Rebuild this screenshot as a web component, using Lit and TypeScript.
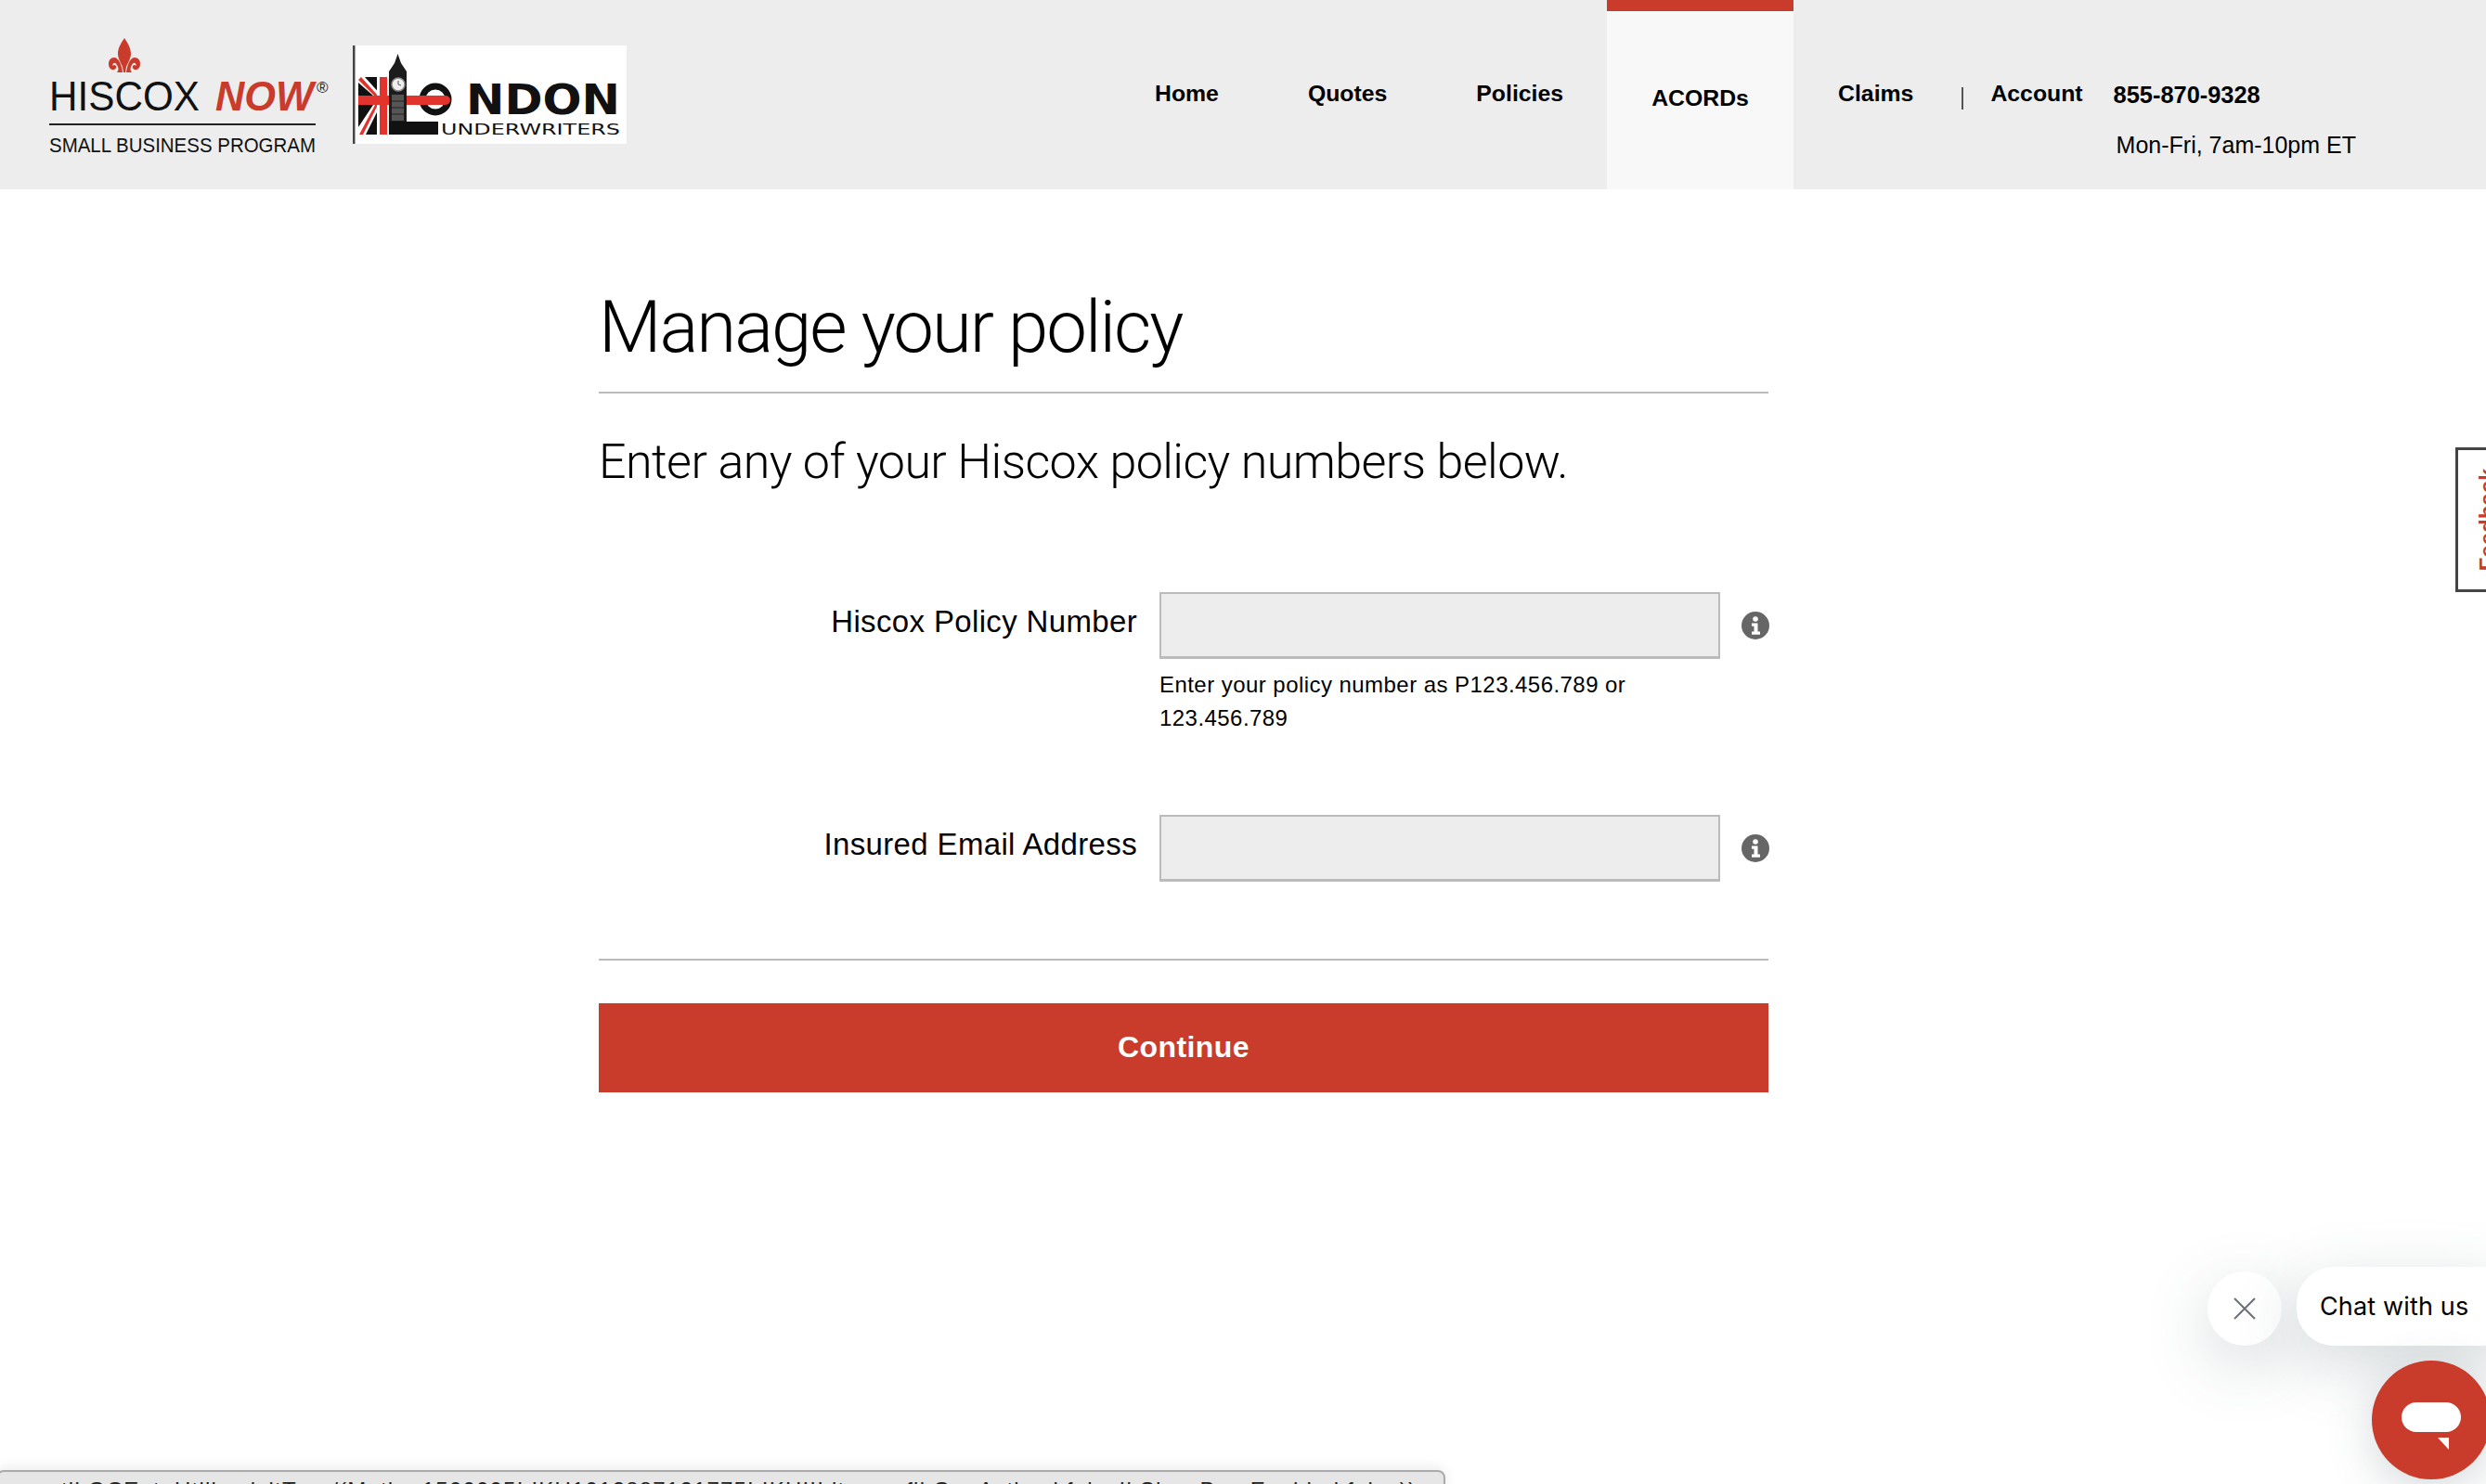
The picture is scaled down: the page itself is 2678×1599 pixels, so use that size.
import { LitElement, html, css } from "lit";
import { customElement } from "lit/decorators.js";

const RED = "#c93c2c";

@customElement("app-root")
export class AppRoot extends LitElement {
  static styles = css`
    :host { display: block; position: relative; width: 2678px; height: 1599px; overflow: hidden; background: #fff; font-family: "Liberation Sans", Arial, sans-serif; color: #000; }
    * { box-sizing: border-box; }
    header { height: 204px; background: #ededed; display: flex; align-items: stretch; }
    .logos { width: 1210px; display: flex; align-items: flex-start; padding: 40px 0 0 48px; flex: none; }
    .hiscox { width: 310px; height: 135px; display: block; flex: none; }
    .london { width: 295px; height: 106px; margin: 9px 0 0 22px; display: block; flex: none; }
    nav { display: flex; align-items: stretch; flex: none; }
    .item { font-size: 24.8px; font-weight: 700; line-height: 28px; padding-top: 87px; white-space: nowrap; }
    .home { margin-left: 34px; }
    .quotes { margin-left: 96px; }
    .policies { margin-left: 96px; }
    .active { width: 201px; margin-left: 47px; background: #f8f8f8; border-top: 12px solid #c93c2c; padding-top: 80px; text-align: center; }
    .claims { margin-left: 48px; }
    .sep { width: 2px; height: 24px; background: #555; margin: 94px 0 0 52px; }
    .account { margin-left: 29px; }
    .contact { margin-left: 33px; }
    .phone { font-size: 25.4px; font-weight: 700; line-height: 28px; margin-top: 88px; }
    .hours { font-size: 25px; line-height: 28px; margin: 26px 0 0 3px; white-space: nowrap; }
    main { width: 1260px; margin-left: 645px; }
    h1 { margin: 0; padding-top: 91px; height: 220px; font-family: Roboto, sans-serif; font-size: 78px; line-height: 116px; font-weight: 300; letter-spacing: -2px; border-bottom: 2px solid #bbb; white-space: nowrap; }
    .intro { margin: 0; padding-top: 45px; font-family: Roboto, sans-serif; font-size: 52px; line-height: 58px; font-weight: 300; letter-spacing: -0.6px; height: 100px; white-space: nowrap; }
    .row { display: flex; align-items: flex-start; }
    .first { margin-top: 114px; }
    .second { margin-top: 86px; }
    label { width: 580px; text-align: right; font-size: 33px; line-height: 38px; padding-top: 13px; flex: none; letter-spacing: 0.35px; }
    .control { width: 604px; margin-left: 24px; flex: none; }
    input { display: block; width: 100%; height: 72px; background: #ededed; border: 2px solid #bbb; border-bottom-width: 3px; border-radius: 0; padding: 0; outline: none; }
    .hint { font-size: 24px; line-height: 36px; margin-top: 10px; letter-spacing: 0.45px; }
    .info { width: 30px; height: 30px; margin: 21px 0 0 23px; display: block; flex: none; }
    .rule { height: 2px; background: #bbb; margin-top: 83px; }
    button { display: block; width: 100%; height: 96px; margin-top: 46px; border: 0; background: #c93c2c; color: #fff; font: 700 32px "Liberation Sans", Arial, sans-serif; letter-spacing: 0.4px; padding: 0 0 2px; }
    .feedback { position: absolute; left: 2645px; top: 482px; width: 70px; height: 156px; background: #fff; border: 3px solid #444; display: flex; align-items: center; justify-content: center; }
    .feedback span { display: block; transform: rotate(-90deg); color: #c93c2c; font-size: 24px; font-weight: 700; white-space: nowrap; }
    .close { position: absolute; left: 2378px; top: 1370px; width: 80px; height: 80px; border-radius: 50%; background: #fff; box-shadow: 0 20px 70px rgba(60,80,90,.22); display: flex; align-items: center; justify-content: center; }
    .close svg { width: 24px; height: 24px; display: block; }
    .bubble { position: absolute; left: 2474px; top: 1365px; width: 240px; height: 85px; border-radius: 40px; background: #fff; box-shadow: 0 20px 70px rgba(60,80,90,.22); font-family: Inter, sans-serif; font-size: 27px; line-height: 85px; padding-left: 25px; white-space: nowrap; letter-spacing: 0.15px; }
    .launcher { position: absolute; left: 2555px; top: 1466px; width: 128px; height: 128px; border-radius: 50%; background: #c93c2c; box-shadow: 0 12px 50px rgba(60,80,90,.22); }
    .launcher svg { position: absolute; left: 32px; top: 45px; width: 64px; height: 51px; display: block; }
    .status { position: absolute; left: -4px; top: 1584px; width: 1561px; height: 40px; background: #e6e6e6; border: 2px solid #aaa; border-radius: 8px; box-shadow: 0 -3px 14px rgba(0,0,0,.08); font-size: 24px; line-height: 30px; padding: 5px 0 0 68px; white-space: nowrap; overflow: hidden; color: #222; letter-spacing: 1.2px; }
  `;

  private infoIcon() {
    return html`<svg class="info" viewBox="0 0 30 30" aria-hidden="true"><circle cx="15" cy="15" r="15" fill="#666"/><circle cx="15" cy="8" r="2.8" fill="#fff"/><path fill="#fff" d="M11 12.5h6.5v9H20v3.2h-9v-3.2h2.5v-5.8H11z"/></svg>`;
  }

  render() {
    return html`
      <header>
        <div class="logos">
          <svg class="hiscox" viewBox="0 0 310 135" aria-label="Hiscox Now">
            <g transform="translate(-48 -40)" fill="${RED}">
              <path d="M134 41C130 47 127 52 127 58C127 63 130 67 132 72L133 78H135L136 72C138 67 141 63 141 58C141 52 138 47 134 41Z"/>
              <g id="curl"><path d="M132 78C131 70 128 62 123 62C119 62 117 65 117 69C117 73 120 76 123 75C126 74 126 70 123 70C122 70 121 71 121 71C122 67 124 67 126 70C128 73 128 76 126 78Z"/></g>
              <path transform="translate(268 0) scale(-1 1)" d="M132 78C131 70 128 62 123 62C119 62 117 65 117 69C117 73 120 76 123 75C126 74 126 70 123 70C122 70 121 71 121 71C122 67 124 67 126 70C128 73 128 76 126 78Z"/>
            </g>
            <text x="5" y="79" font-family="Liberation Sans" font-size="45" textLength="162" lengthAdjust="spacingAndGlyphs" fill="#111">HISCOX</text>
            <text x="184" y="79" font-family="Liberation Sans" font-style="italic" font-weight="700" font-size="45" textLength="106" lengthAdjust="spacingAndGlyphs" fill="${RED}">NOW</text>
            <text x="293" y="60" font-family="Liberation Sans" font-size="17" fill="#222">®</text>
            <rect x="5" y="93" width="287" height="2" fill="#222"/>
            <text x="5" y="124" font-family="Liberation Sans" font-size="22" textLength="287" lengthAdjust="spacingAndGlyphs" fill="#111">SMALL BUSINESS PROGRAM</text>
          </svg>
          <svg class="london" viewBox="0 0 295 106" aria-label="London Underwriters">
            <rect width="295" height="106" fill="#fff"/>
            <rect width="2.5" height="106" fill="#444"/>
            <rect x="6" y="34" width="33" height="62" fill="#111"/>
            <path d="M6 34H13L31 54H22L6 40zM6 96V88L22 64H30L14 96z" fill="#fff"/>
            <path d="M9 34L27 54H23L6 37zM7 96L24 64H27L11 96z" fill="#e2342d"/>
            <rect x="26" y="34" width="13" height="62" fill="#fff"/>
            <rect x="29" y="34" width="8" height="62" fill="#e2342d"/>
            <circle cx="89" cy="58" r="14" fill="none" stroke="#111" stroke-width="7"/>
            <path d="M6 54H100a5 5 0 0 1 0 10H6z" fill="#e2342d"/>
            <path d="M39 28L45 19 48.5 9 52 19 58 28V82H39z" fill="#1c1c1c"/>
            <rect x="42" y="53" width="13" height="28" fill="#555"/>
            <path d="M42 60h13M42 67h13M42 74h13" stroke="#222" stroke-width="1"/>
            <circle cx="49" cy="42" r="7" fill="#eee" stroke="#888" stroke-width="1.5"/>
            <path d="M49 38v4l3 1" stroke="#555" stroke-width="1" fill="none"/>
            <rect x="39" y="82" width="53" height="14" fill="#111"/>
            <text x="122" y="74" font-family="DejaVu Sans" font-weight="700" font-size="44" textLength="166" lengthAdjust="spacingAndGlyphs" fill="#111">NDON</text>
            <text x="95" y="96" font-family="DejaVu Sans" font-size="16.5" textLength="193" lengthAdjust="spacingAndGlyphs" fill="#111">UNDERWRITERS</text>
          </svg>
        </div>
        <nav>
          <div class="item home">Home</div>
          <div class="item quotes">Quotes</div>
          <div class="item policies">Policies</div>
          <div class="item active">ACORDs</div>
          <div class="item claims">Claims</div>
          <div class="sep"></div>
          <div class="item account">Account</div>
          <div class="contact"><div class="phone">855-870-9328</div><div class="hours">Mon-Fri, 7am-10pm ET</div></div>
        </nav>
      </header>
      <main>
        <h1>Manage your policy</h1>
        <p class="intro">Enter any of your Hiscox policy numbers below.</p>
        <div class="row first">
          <label for="num">Hiscox Policy Number</label>
          <div class="control">
            <input id="num" type="text" />
            <div class="hint">Enter your policy number as P123.456.789 or<br />123.456.789</div>
          </div>
          ${this.infoIcon()}
        </div>
        <div class="row second">
          <label for="mail">Insured Email Address</label>
          <div class="control"><input id="mail" type="text" /></div>
          ${this.infoIcon()}
        </div>
        <div class="rule"></div>
        <button>Continue</button>
      </main>
      <div class="feedback"><span>Feedback</span></div>
      <div class="close"><svg viewBox="0 0 24 24"><path d="M1 1l22 22M23 1L1 23" stroke="#6b7277" stroke-width="2" fill="none"/></svg></div>
      <div class="bubble">Chat with us</div>
      <div class="launcher"><svg viewBox="0 0 64 51"><rect width="64" height="32" rx="16" fill="#fff"/><path d="M39 38h12v13z" fill="#fff"/></svg></div>
      <div class="status">tli.GCE_t=UtilizedsitTrue/(Mathe.1500005!.!KU1012887121775!.!KH!!!.itr.ans.fil.GanActive.l.false!i.ShowBarsEnabled.false))</div>
    `;
  }
}
